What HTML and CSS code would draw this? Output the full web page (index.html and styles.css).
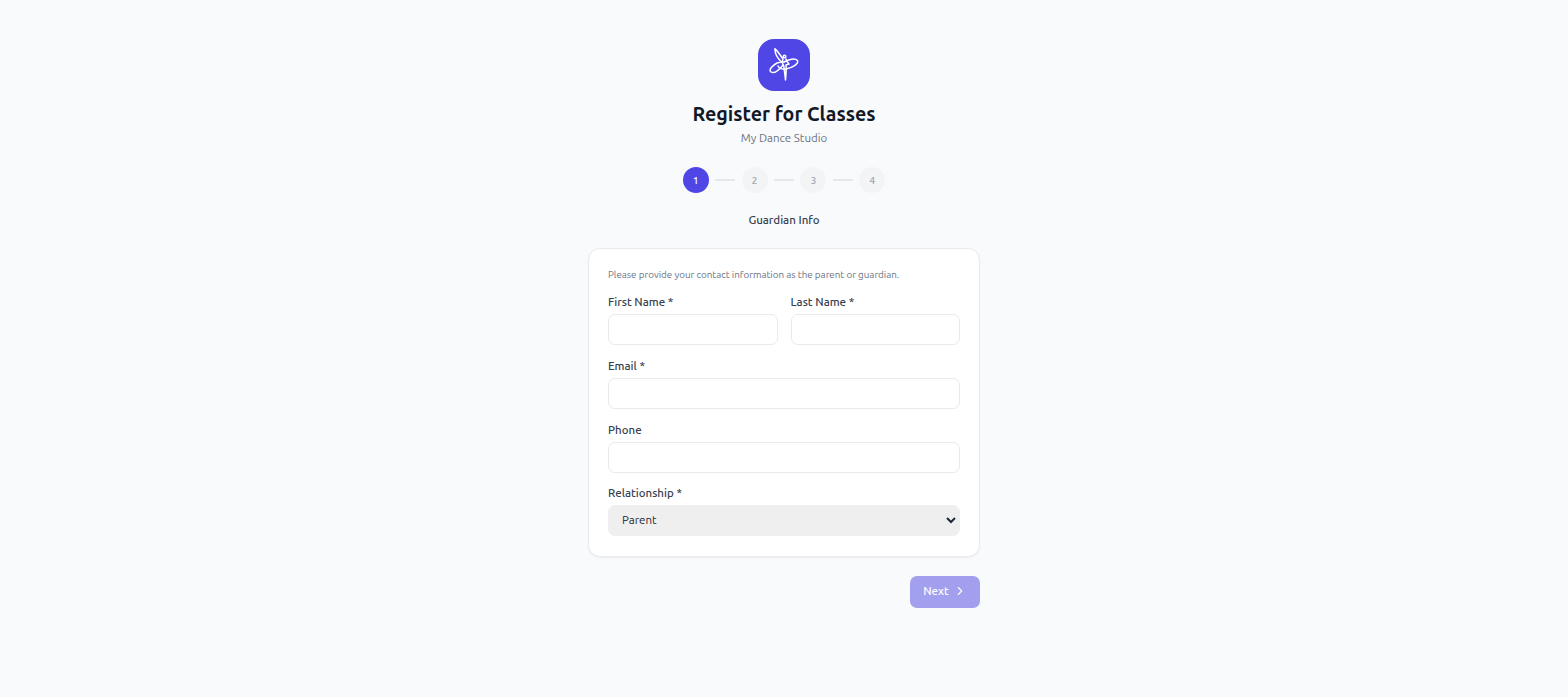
FILE: index.html
```html
<!DOCTYPE html>
<html lang="en">

<head>
    <meta charset="UTF-8">
    <meta name="viewport" content="width=device-width, initial-scale=1.0">
    <title>Register for Classes</title>
    <link rel="stylesheet" href="styles.css">
</head>

<body>
    <main class="register-page">
        <div class="register-head">
            <div class="logo">
                <svg width="40" height="40" viewBox="0 0 40 40" fill="none" stroke="#fff" stroke-width="1.5" stroke-linecap="round" stroke-linejoin="round">
                    <path d="M11 4 C13 5 16 10 19 14 C18 16 18 18 19 20 C15 25 10 29 7 27 C4 25 9 20 13 18 C16 17 18 17 20 17" />
                    <path d="M11 4 C11 9 14 14 18 17" />
                    <path d="M20 17 C25 14 31 13 33.5 15.5 C35 19 28 23 22 24 C18 24.5 15 23 14 21" />
                    <circle cx="20.5" cy="11.5" r="1.3" />
                    <path d="M19.5 20 C20.5 25 21 30 21.5 35 C22 30 22.5 25 22 20 L25 19 L22.5 16 L22 14" />
                </svg>
            </div>
            <h1 class="register-title">Register for Classes</h1>
            <p class="studio-name">My Dance Studio</p>
        </div>

        <ul class="steps">
            <li class="step step-active">1</li>
            <li class="step-line"></li>
            <li class="step">2</li>
            <li class="step-line"></li>
            <li class="step">3</li>
            <li class="step-line"></li>
            <li class="step">4</li>
        </ul>
        <p class="step-label">Guardian Info</p>

        <form class="form-card">
            <p class="form-hint">Please provide your contact information as the parent or guardian.</p>
            <div class="form-row">
                <div class="form-field">
                    <label for="first-name">First Name *</label>
                    <input type="text" id="first-name">
                </div>
                <div class="form-field">
                    <label for="last-name">Last Name *</label>
                    <input type="text" id="last-name">
                </div>
            </div>
            <div class="form-field">
                <label for="email">Email *</label>
                <input type="email" id="email">
            </div>
            <div class="form-field">
                <label for="phone">Phone</label>
                <input type="text" id="phone">
            </div>
            <div class="form-field">
                <label for="relationship">Relationship *</label>
                <select id="relationship">
                    <option>Parent</option>
                    <option>Guardian</option>
                </select>
            </div>
        </form>

        <div class="form-actions">
            <button class="next-button" type="button" disabled>
                Next
                <svg width="14" height="14" viewBox="0 0 24 24" fill="none" stroke="currentColor" stroke-width="2" stroke-linecap="round" stroke-linejoin="round">
                    <path d="m9 18 6-6-6-6" />
                </svg>
            </button>
        </div>
    </main>
</body>

</html>
```

FILE: styles.css
```css
body {
    margin: 0;
    min-height: 697px;
    background-color: #f9fafb;
    color: #111827;
    font-family: "Ubuntu", "Noto Sans", sans-serif;
}

p,
h1,
ul {
    margin: 0;
    padding: 0;
}

ul {
    list-style: none;
}

.register-page {
    width: 392px;
    margin: 0 auto;
    padding-top: 39px;
}

.register-head {
    display: flex;
    flex-direction: column;
    align-items: center;
}

.logo {
    width: 52px;
    height: 52px;
    background-color: #4f46e5;
    border-radius: 16px;
    display: flex;
    align-items: center;
    justify-content: center;
}

.register-title {
    margin-top: 9px;
    font-size: 19.6px;
    line-height: 28px;
    font-weight: 700;
}

.studio-name {
    margin-top: 2px;
    font-size: 11.5px;
    line-height: 16px;
    color: #6b7280;
}

.steps {
    display: flex;
    align-items: center;
    justify-content: center;
    gap: 6.4px;
    margin-top: 21px;
}

.step {
    width: 26px;
    height: 26px;
    border-radius: 50%;
    background-color: #f3f4f6;
    color: #9ca3af;
    font-size: 9.8px;
    font-weight: 500;
    display: flex;
    align-items: center;
    justify-content: center;
}

.step-active {
    background-color: #4f46e5;
    color: #fff;
}

.step-line {
    width: 20px;
    height: 2px;
    background-color: #e5e7eb;
}

.step-label {
    margin-top: 19px;
    font-size: 11.5px;
    font-weight: 500;
    line-height: 16px;
    text-align: center;
    color: #374151;
}

.form-card {
    margin-top: 20px;
    background-color: #fff;
    border: 1px solid #e9eaee;
    border-radius: 12px;
    padding: 19px 19px 19.6px;
    display: flex;
    flex-direction: column;
    gap: 12.67px;
    box-shadow: 0 1px 2px rgba(0, 0, 0, 0.05);
}

.form-hint {
    margin-bottom: 0.6px;
    font-size: 9.8px;
    line-height: 13px;
    color: #6b7280;
}

.form-row {
    display: grid;
    grid-template-columns: 1fr 1fr;
    gap: 13px;
}

.form-field {
    display: flex;
    flex-direction: column;
    gap: 4px;
}

.form-field label {
    font-size: 11.5px;
    font-weight: 500;
    line-height: 16px;
    color: #374151;
}

.form-field input,
.form-field select {
    box-sizing: border-box;
    width: 100%;
    height: 31px;
    margin: 0;
    border: 1px solid #e9eaee;
    border-radius: 7px;
    background-color: #fff;
    font-family: inherit;
    font-size: 11.5px;
    color: #1f2937;
    padding: 0 8px 0 9px;
}

.form-field select {
    padding-bottom: 2px;
    background-color: #efefef;
    border-color: #efefef;
}

.form-actions {
    display: flex;
    justify-content: flex-end;
    margin-top: 19px;
}

.next-button {
    width: 70px;
    height: 32px;
    padding: 0 0 2px;
    background-color: #4f46e5;
    opacity: 0.5;
    border: 0;
    border-radius: 7px;
    color: #fff;
    font-family: inherit;
    font-size: 11.5px;
    font-weight: 500;
    display: flex;
    align-items: center;
    justify-content: center;
    gap: 4px;
}
```
